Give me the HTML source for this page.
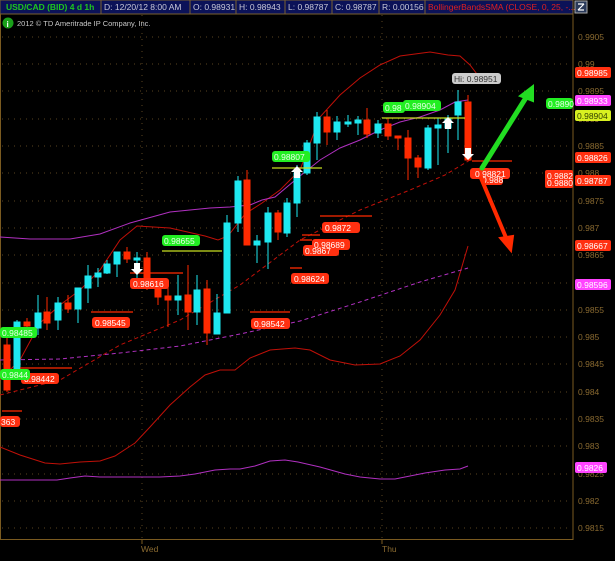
<!DOCTYPE html>
<html><head><meta charset="utf-8"><style>
html,body{margin:0;padding:0;background:#000;}
body{width:615px;height:556px;overflow:hidden;font-family:"Liberation Sans",sans-serif;}
svg text{font-family:"Liberation Sans",sans-serif;}
</style></head><body>
<svg width="615" height="556" viewBox="0 0 615 556" xmlns="http://www.w3.org/2000/svg">
<rect width="615" height="556" fill="#000"/>
<g font-size="8.5">
<rect x="0" y="0" width="101" height="14" fill="#0b1258" stroke="#7a6030" stroke-width="1"/>
<text x="6" y="10" fill="#1ec81e" font-weight="bold">USD/CAD (BID) 4 d 1h</text>
<rect x="101" y="0" width="89" height="14" fill="#0b1258" stroke="#7a6030"/>
<text x="104" y="10" fill="#c8c8d8">D: 12/20/12 8:00 AM</text>
<rect x="190" y="0" width="46" height="14" fill="#0b1258" stroke="#7a6030"/>
<text x="193" y="10" fill="#c8c8d8">O: 0.98931</text>
<rect x="236" y="0" width="49" height="14" fill="#0b1258" stroke="#7a6030"/>
<text x="239" y="10" fill="#c8c8d8">H: 0.98943</text>
<rect x="285" y="0" width="47" height="14" fill="#0b1258" stroke="#7a6030"/>
<text x="288" y="10" fill="#c8c8d8">L: 0.98787</text>
<rect x="332" y="0" width="47" height="14" fill="#0b1258" stroke="#7a6030"/>
<text x="335" y="10" fill="#c8c8d8">C: 0.98787</text>
<rect x="379" y="0" width="46" height="14" fill="#0b1258" stroke="#7a6030"/>
<text x="382" y="10" fill="#c8c8d8">R: 0.00156</text>
<rect x="425" y="0" width="148" height="14" fill="#0b1258" stroke="#7a6030"/>
<text x="428" y="10" fill="#e02020">BollingerBandsSMA (CLOSE, 0, 25, -...</text>
<rect x="575" y="1" width="12" height="12" fill="#2a3a5a" stroke="#aaa"/>
<path d="M578 10 L584 4 M578 4 h6 M578 10 h6" stroke="#fff" stroke-width="1.2" fill="none"/>
</g>
<circle cx="8" cy="23" r="5.5" fill="#1aa01a"/>
<text x="6.5" y="27" font-size="8" fill="#fff" font-weight="bold">i</text>
<text x="17" y="26" font-size="7.5" fill="#c8c8c8">2012 © TD Ameritrade IP Company, Inc.</text>
<line x1="0.5" y1="14" x2="0.5" y2="540" stroke="#7a5a20"/>
<line x1="573" y1="14" x2="573" y2="540" stroke="#7a5a20"/>
<line x1="0" y1="539.5" x2="573" y2="539.5" stroke="#7a5a20"/>
<g stroke="#5a4520" stroke-dasharray="1,5" stroke-width="1">
<line x1="2" y1="37" x2="572" y2="37"/><line x1="2" y1="64" x2="572" y2="64"/><line x1="2" y1="91" x2="572" y2="91"/><line x1="2" y1="119" x2="572" y2="119"/><line x1="2" y1="146" x2="572" y2="146"/><line x1="2" y1="173" x2="572" y2="173"/><line x1="2" y1="201" x2="572" y2="201"/><line x1="2" y1="228" x2="572" y2="228"/><line x1="2" y1="255" x2="572" y2="255"/><line x1="2" y1="283" x2="572" y2="283"/><line x1="2" y1="310" x2="572" y2="310"/><line x1="2" y1="337" x2="572" y2="337"/><line x1="2" y1="364" x2="572" y2="364"/><line x1="2" y1="392" x2="572" y2="392"/><line x1="2" y1="419" x2="572" y2="419"/><line x1="2" y1="446" x2="572" y2="446"/><line x1="2" y1="474" x2="572" y2="474"/><line x1="2" y1="501" x2="572" y2="501"/><line x1="2" y1="528" x2="572" y2="528"/>
<line x1="142" y1="15" x2="142" y2="539"/><line x1="382" y1="15" x2="382" y2="539"/>
</g>
<g fill="#8a6a30" font-size="8.5">
<text x="578" y="40">0.9905</text><text x="578" y="67">0.99</text><text x="578" y="94">0.9895</text><text x="578" y="122">0.989</text><text x="578" y="149">0.9885</text><text x="578" y="176">0.988</text><text x="578" y="204">0.9875</text><text x="578" y="231">0.987</text><text x="578" y="258">0.9865</text><text x="578" y="286">0.986</text><text x="578" y="313">0.9855</text><text x="578" y="340">0.985</text><text x="578" y="367">0.9845</text><text x="578" y="395">0.984</text><text x="578" y="422">0.9835</text><text x="578" y="449">0.983</text><text x="578" y="477">0.9825</text><text x="578" y="504">0.982</text><text x="578" y="531">0.9815</text>
<text x="141" y="552">Wed</text><text x="382" y="552">Thu</text>
</g>
<g stroke="#7a5a20"><line x1="142" y1="540" x2="142" y2="544"/><line x1="382" y1="540" x2="382" y2="544"/></g>
<g fill="none" stroke-width="1">
<path d="M0 380 L20 360 L40 323 L60 305 L80 290 L100 270 L120 240 L137 226 L170 228 L205 236 L218 240 L228 236 L245 214 L262 203 L280 190 L300 170 L320 117 L340 95 L360 78 L380 65 L400 56 L430 52 L448 55 L460 56 L470 65 L480 78" stroke="#c01008"/>
<path d="M0 395 L60 380 L120 345 L180 320 L240 285 L300 240 L360 210 L410 190 L445 175 L470 160" stroke="#c01008" stroke-dasharray="4,3"/>
<path d="M0 447 L20 455 L45 463 L60 464 L80 462 L100 461 L115 456 L135 443 L150 427 L170 405 L190 387 L205 375 L220 370 L235 370 L250 358 L270 350 L295 348 L310 350 L330 360 L355 365 L380 364 L400 356 L420 340 L440 315 L455 290 L468 246" stroke="#c01008"/>
<path d="M0 237 L30 239 L70 239 L100 234 L130 223 L170 212 L210 208 L230 207 L250 205 L262 200 L275 197 L300 176 L320 160 L340 148 L360 140 L380 130 L400 122 L420 117 L440 110 L455 102 L468 100" stroke="#b030c0"/>
<path d="M0 360 L60 359 L120 353 L180 346 L240 334 L300 321 L360 302 L420 282 L468 268" stroke="#b030c0" stroke-dasharray="4,3"/>
<path d="M0 480 L57 480 L70 478 L85 476 L100 477 L130 477 L160 477 L180 476 L195 474 L215 470 L230 469 L240 469 L255 466 L270 461 L285 460 L298 462 L320 467 L345 474 L360 477 L380 479 L395 479 L410 476 L425 473 L445 470 L460 469 L468 466" stroke="#b030c0"/>
</g>
<g stroke-width="1">
<g stroke="#ff2a00" fill="#ff2a00">
<line x1="7" y1="330" x2="7" y2="392"/><rect x="4" y="345" width="6" height="45"/>
<line x1="27" y1="318" x2="27" y2="330"/><rect x="24" y="322" width="6" height="4"/>
<line x1="47" y1="297" x2="47" y2="330"/><rect x="44" y="312" width="6" height="11"/>
<line x1="68" y1="295" x2="68" y2="313"/><rect x="65" y="303" width="6" height="6"/>
<line x1="127" y1="247" x2="127" y2="263"/><rect x="124" y="252" width="6" height="7"/>
<line x1="147" y1="252" x2="147" y2="290"/><rect x="144" y="258" width="6" height="30"/>
<line x1="158" y1="280" x2="158" y2="305"/><rect x="155" y="288" width="6" height="9"/>
<line x1="168" y1="283" x2="168" y2="327"/><rect x="165" y="296" width="6" height="4"/>
<line x1="188" y1="265" x2="188" y2="330"/><rect x="185" y="295" width="6" height="17"/>
<line x1="207" y1="280" x2="207" y2="345"/><rect x="204" y="289" width="6" height="44"/>
<line x1="247" y1="170" x2="247" y2="245"/><rect x="244" y="180" width="6" height="65"/>
<line x1="278" y1="210" x2="278" y2="240"/><rect x="275" y="213" width="6" height="19"/>
<line x1="327" y1="110" x2="327" y2="145"/><rect x="324" y="117" width="6" height="15"/>
<line x1="367" y1="108" x2="367" y2="138"/><rect x="364" y="120" width="6" height="14"/>
<line x1="388" y1="118" x2="388" y2="140"/><rect x="385" y="124" width="6" height="12"/>
<line x1="398" y1="136" x2="398" y2="150"/><rect x="395" y="136" width="6" height="2"/>
<line x1="408" y1="130" x2="408" y2="180"/><rect x="405" y="138" width="6" height="20"/>
<line x1="418" y1="155" x2="418" y2="178"/><rect x="415" y="158" width="6" height="9"/>
<line x1="468" y1="95" x2="468" y2="160"/><rect x="465" y="102" width="6" height="58"/>
</g>
<g stroke="#1ee8f0" fill="#1ee8f0">
<line x1="17" y1="320" x2="17" y2="372"/><rect x="14" y="322" width="6" height="48"/>
<line x1="38" y1="295" x2="38" y2="335"/><rect x="35" y="313" width="6" height="15"/>
<line x1="58" y1="297" x2="58" y2="330"/><rect x="55" y="303" width="6" height="17"/>
<line x1="78" y1="288" x2="78" y2="323"/><rect x="75" y="288" width="6" height="21"/>
<line x1="88" y1="265" x2="88" y2="303"/><rect x="85" y="276" width="6" height="12"/>
<line x1="98" y1="268" x2="98" y2="287"/><rect x="95" y="273" width="6" height="4"/>
<line x1="107" y1="260" x2="107" y2="274"/><rect x="104" y="264" width="6" height="9"/>
<line x1="117" y1="252" x2="117" y2="277"/><rect x="114" y="252" width="6" height="12"/>
<line x1="137" y1="252" x2="137" y2="288"/><rect x="134" y="258" width="6" height="2"/>
<line x1="178" y1="275" x2="178" y2="315"/><rect x="175" y="296" width="6" height="4"/>
<line x1="197" y1="275" x2="197" y2="325"/><rect x="194" y="290" width="6" height="22"/>
<line x1="217" y1="294" x2="217" y2="334"/><rect x="214" y="313" width="6" height="21"/>
<line x1="227" y1="215" x2="227" y2="313"/><rect x="224" y="223" width="6" height="90"/>
<line x1="238" y1="176" x2="238" y2="232"/><rect x="235" y="181" width="6" height="42"/>
<line x1="257" y1="235" x2="257" y2="263"/><rect x="254" y="241" width="6" height="4"/>
<line x1="268" y1="207" x2="268" y2="269"/><rect x="265" y="213" width="6" height="29"/>
<line x1="287" y1="198" x2="287" y2="237"/><rect x="284" y="203" width="6" height="30"/>
<line x1="297" y1="165" x2="297" y2="217"/><rect x="294" y="173" width="6" height="30"/>
<line x1="307" y1="140" x2="307" y2="175"/><rect x="304" y="143" width="6" height="30"/>
<line x1="317" y1="112" x2="317" y2="160"/><rect x="314" y="117" width="6" height="26"/>
<line x1="337" y1="116" x2="337" y2="140"/><rect x="334" y="122" width="6" height="10"/>
<line x1="348" y1="115" x2="348" y2="127"/><rect x="345" y="122" width="6" height="2"/>
<line x1="358" y1="116" x2="358" y2="135"/><rect x="355" y="120" width="6" height="3"/>
<line x1="378" y1="120" x2="378" y2="138"/><rect x="375" y="124" width="6" height="9"/>
<line x1="428" y1="125" x2="428" y2="170"/><rect x="425" y="128" width="6" height="40"/>
<line x1="438" y1="118" x2="438" y2="165"/><rect x="435" y="125" width="6" height="3"/>
<line x1="448" y1="115" x2="448" y2="153"/><rect x="445" y="119" width="6" height="9"/>
<line x1="458" y1="90" x2="458" y2="140"/><rect x="455" y="102" width="6" height="13"/>
</g>
</g>
<g stroke-width="1.3">
<line x1="272" y1="168" x2="322" y2="168" stroke="#c8e020"/>
<line x1="162" y1="251" x2="222" y2="251" stroke="#c8e020"/>
<line x1="382" y1="118" x2="465" y2="118" stroke="#c8e020"/>
<line x1="320" y1="216" x2="372" y2="216" stroke="#ff2a00"/>
<line x1="91" y1="312" x2="133" y2="312" stroke="#ff2a00"/>
<line x1="130" y1="273" x2="183" y2="273" stroke="#ff2a00"/>
<line x1="250" y1="312" x2="290" y2="312" stroke="#ff2a00"/>
<line x1="20" y1="368" x2="72" y2="368" stroke="#ff2a00"/>
<line x1="2" y1="411" x2="22" y2="411" stroke="#ff2a00"/>
<line x1="472" y1="161" x2="512" y2="161" stroke="#ff2a00"/>
<line x1="290" y1="268" x2="302" y2="268" stroke="#ff2a00"/>
<line x1="302" y1="235" x2="320" y2="235" stroke="#ff2a00"/>
<line x1="300" y1="240" x2="312" y2="240" stroke="#ff2a00"/>
</g>
<g fill="#fff">
<path d="M294 178 h6 v-6 h3 l-6 -6 l-6 6 h3z"/>
<path d="M445 129 h6 v-6 h3 l-6 -6 l-6 6 h3z"/>
<path d="M134 263 h6 v6 h3 l-6 6 l-6 -6 h3z"/>
<path d="M465 148 h6 v6 h3 l-6 6 l-6 -6 h3z"/>
</g>
<g font-size="8.5">
<g fill="#ff3010"><rect x="322" y="222" width="38" height="11" rx="3"/><rect x="312" y="239" width="38" height="11" rx="3"/><rect x="303" y="245" width="36" height="11" rx="3"/><rect x="291" y="273" width="38" height="11" rx="3"/><rect x="130" y="278" width="39" height="11" rx="3"/><rect x="92" y="317" width="38" height="11" rx="3"/><rect x="251" y="318" width="39" height="11" rx="3"/><rect x="21" y="373" width="38" height="11" rx="3"/><rect x="0" y="416" width="20" height="11" rx="3"/><rect x="470" y="168" width="40" height="11" rx="3"/><rect x="481" y="174" width="22" height="11" rx="3"/></g>
<g fill="#fff"><text x="325" y="231">0.9872</text><text x="314" y="248">0.98689</text><text x="305" y="254">0.9867</text><text x="294" y="282">0.98624</text><text x="133" y="287">0.98616</text><text x="95" y="326">0.98545</text><text x="254" y="327">0.98542</text><text x="24" y="382">0.98442</text><text x="1" y="425">363</text><text x="475" y="177">0.98821</text><text x="482" y="183">0.988</text></g>
<g fill="#22ee22"><rect x="272" y="151" width="38" height="11" rx="3"/><rect x="162" y="235" width="38" height="11" rx="3"/><rect x="383" y="102" width="22" height="11" rx="3"/><rect x="403" y="100" width="38" height="11" rx="3"/><rect x="0" y="327" width="37" height="11" rx="3"/><rect x="0" y="369" width="30" height="11" rx="3"/><rect x="546" y="98" width="27" height="11" rx="3"/></g>
<g fill="#e8ffe8"><text x="274" y="160">0.98807</text><text x="164" y="244">0.98655</text><text x="385" y="111">0.98</text><text x="405" y="109">0.98904</text><text x="2" y="336">0.98485</text><text x="2" y="378">0.9844</text><text x="548" y="107">0.9890</text></g>
<rect x="452" y="73" width="49" height="11" rx="3" fill="#ccc"/><text x="454" y="82" fill="#333">Hi: 0.98951</text>
<g fill="#ff3010"><rect x="575" y="67" width="36" height="11" rx="2"/><rect x="575" y="152" width="36" height="11" rx="2"/><rect x="575" y="175" width="36" height="11" rx="2"/><rect x="575" y="240" width="36" height="11" rx="2"/><rect x="545" y="170" width="28" height="11" rx="2"/><rect x="545" y="177" width="28" height="11" rx="2"/></g>
<rect x="575" y="95" width="36" height="11" rx="2" fill="#ff44ff"/>
<rect x="575" y="110" width="36" height="11" rx="2" fill="#d8f020"/>
<rect x="575" y="279" width="36" height="11" rx="2" fill="#ff44ff"/>
<rect x="575" y="462" width="32" height="11" rx="2" fill="#ff44ff"/>
<g fill="#fff"><text x="577" y="76">0.98985</text><text x="577" y="161">0.98826</text><text x="577" y="184">0.98787</text><text x="577" y="249">0.98667</text><text x="547" y="179">0.9882</text><text x="547" y="186">0.9880</text><text x="577" y="104">0.98933</text><text x="577" y="288">0.98596</text><text x="577" y="471">0.9826</text></g>
<text x="577" y="119" fill="#334000">0.98904</text>
</g>
<g stroke-linecap="round">
<line x1="482" y1="168" x2="527" y2="96" stroke="#22dd22" stroke-width="5"/>
<path d="M533 86 L520 96 L533 101 Z" fill="#22dd22" stroke="#22dd22" stroke-width="2"/>
<line x1="481" y1="178" x2="507" y2="240" stroke="#ff2a00" stroke-width="4"/>
<path d="M511 251 L500 238 L513 236 Z" fill="#ff2a00" stroke="#ff2a00" stroke-width="2"/>
</g>
</svg>
</body></html>
